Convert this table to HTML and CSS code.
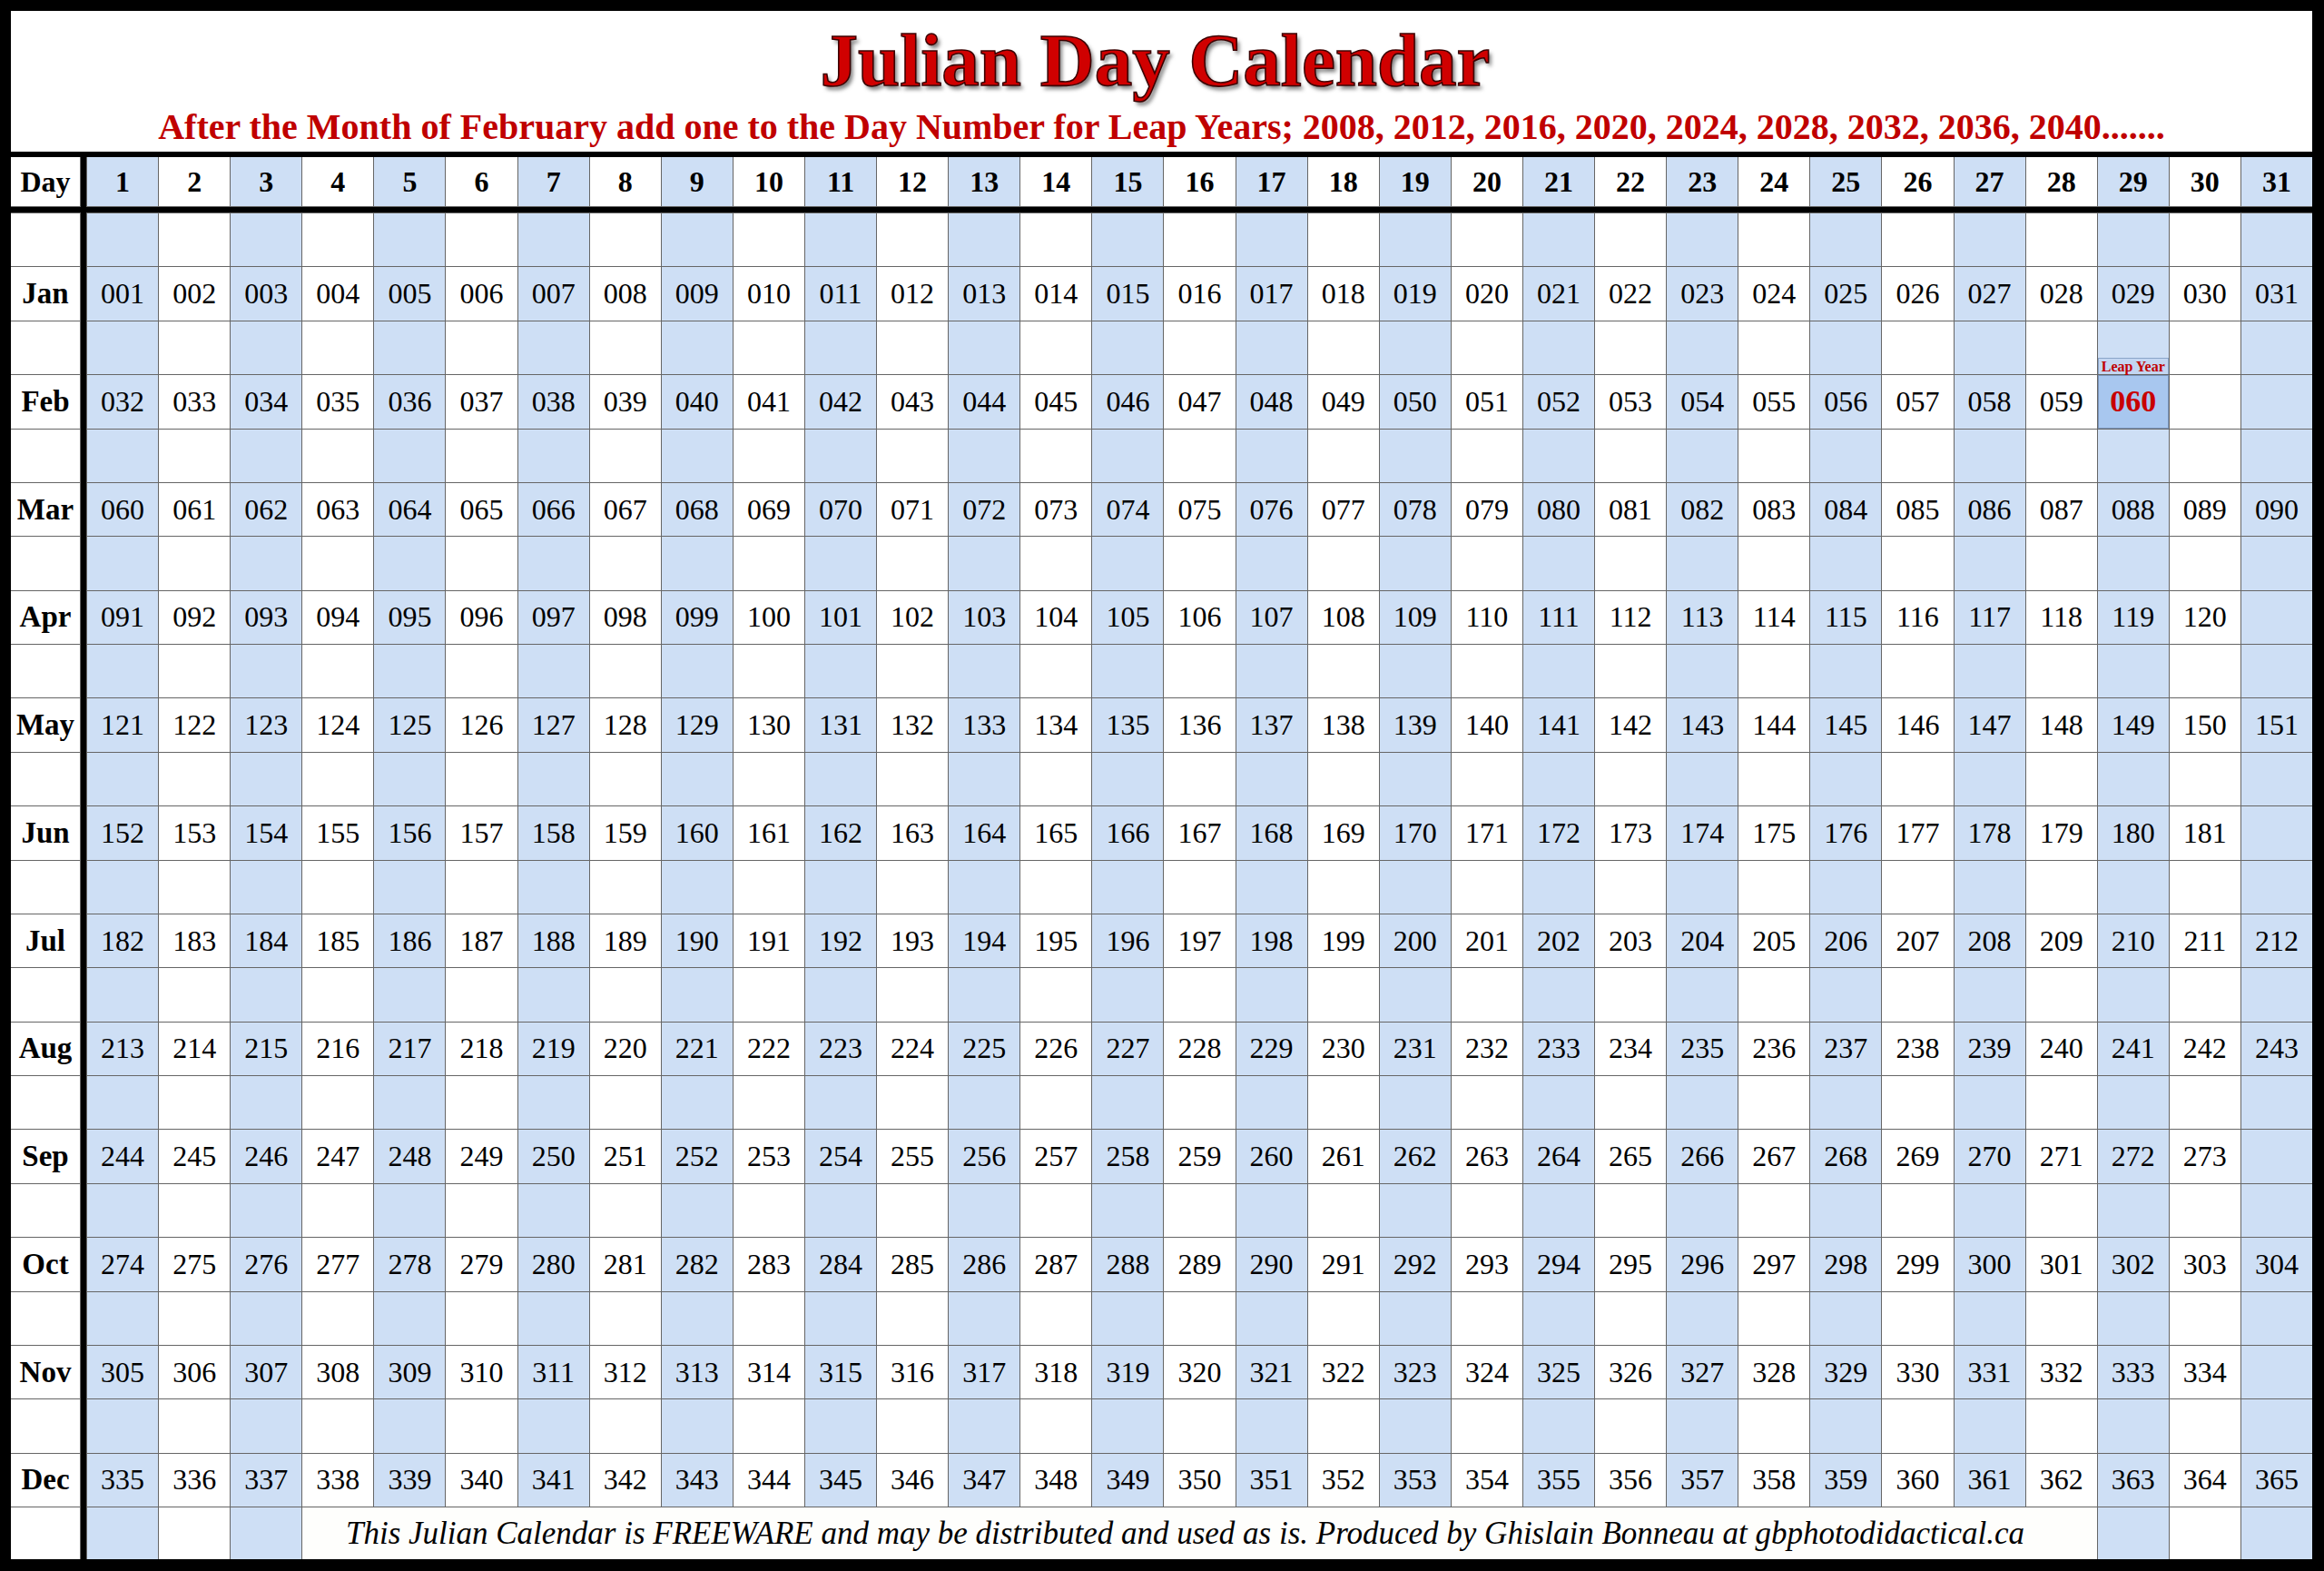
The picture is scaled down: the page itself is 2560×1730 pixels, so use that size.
FILE: index.html
```html
<!DOCTYPE html>
<html lang="en">
<head>
<meta charset="utf-8">
<title>Julian Day Calendar</title>
<link rel="stylesheet" href="styles.css">
</head>
<body>
<main class="sheet">
  <header class="title-box">
    <h1 class="title">Julian Day Calendar</h1>
    <p class="subtitle">After the Month of February add one to the Day Number for Leap Years; 2008, 2012, 2016, 2020, 2024, 2028, 2032, 2036, 2040.......</p>
  </header>
  <div class="grid" id="grid"></div>
</main>
<script src="script.js"></script>
</body>
</html>
```

FILE: styles.css
```css
html, body {
  margin: 0;
  padding: 0;
  background: #000;
}
body {
  width: 2560px;
  height: 1730px;
  overflow: hidden;
  font-family: "Liberation Serif", "Times New Roman", serif;
}
.sheet {
  box-sizing: border-box;
  width: 2560px;
  height: 1730px;
  padding: 12px 13px 13px 12px;
  display: flex;
  flex-direction: column;
  gap: 6px;
  background: #000;
}
.title-box {
  flex: none;
  height: 155px;
  box-sizing: border-box;
  padding-top: 13px;
  padding-right: 14px;
  background: #fff;
  text-align: center;
}
.title {
  margin: 0;
  font-size: 83px;
  line-height: 83px;
  font-weight: 700;
  color: #d00000;
  -webkit-text-stroke: 1.6px #3a0000;
  text-shadow: 3px 4px 4px rgba(0, 0, 0, 0.5);
}
.subtitle {
  margin: 12px 0 0;
  padding-left: 14px;
  font-size: 40px;
  line-height: 40px;
  font-weight: 700;
  color: #c00000;
  white-space: nowrap;
}
.grid {
  flex: 1;
  display: grid;
  grid-template-columns: 76px 6px repeat(31, 1fr);
  grid-template-rows: 54px 6px repeat(24, 1fr) 57px;
  gap: 1px;
  background: #666;
}
.sep-v {
  grid-column: 2;
  grid-row: 1 / -1;
  background: #000;
}
.sep-h {
  grid-column: 1 / -1;
  grid-row: 2;
  background: #000;
}
.cell {
  display: flex;
  align-items: center;
  justify-content: center;
  background: #fff;
  color: #000;
  font-size: 32px;
  white-space: nowrap;
}
.cell.blue {
  background: #cedff5;
}
.cell.head {
  font-size: 32px;
  font-weight: 700;
}
.cell.month {
  font-size: 33px;
  font-weight: 700;
}
.cell.note {
  grid-column: span 25;
  padding-right: 32px;
  font-size: 35px;
  font-style: italic;
  background: #fefefc;
}
.cell.leap-slot {
  align-items: flex-end;
}
.leap-label {
  display: block;
  width: 100%;
  height: 18px;
  box-sizing: border-box;
  background: #c3d6f1;
  border: 1px solid #8aa4c8;
  border-bottom: none;
  color: #c00000;
  font-size: 16px;
  line-height: 18px;
  font-weight: 700;
  text-align: center;
}
.cell.leap-day {
  background: #a8c7ef;
  color: #c80000;
  font-size: 34px;
  font-weight: 700;
  box-shadow: inset 0 0 0 1px #7a95bb;
}
```

FILE: script.js
```js
(function () {
  var grid = document.getElementById('grid');

  function cell(text, cls) {
    var d = document.createElement('div');
    d.className = 'cell' + (cls ? ' ' + cls : '');
    if (text) d.textContent = text;
    grid.appendChild(d);
    return d;
  }

  var v = document.createElement('div');
  v.className = 'sep-v';
  grid.appendChild(v);
  var h = document.createElement('div');
  h.className = 'sep-h';
  grid.appendChild(h);

  cell('Day', 'head');
  for (var d = 1; d <= 31; d++) {
    cell(String(d), 'head' + (d % 2 ? ' blue' : ''));
  }

  var months = [['Jan', 31], ['Feb', 28], ['Mar', 31], ['Apr', 30], ['May', 31], ['Jun', 30],
                ['Jul', 31], ['Aug', 31], ['Sep', 30], ['Oct', 31], ['Nov', 30], ['Dec', 31]];
  var n = 1;
  for (var m = 0; m < months.length; m++) {
    var name = months[m][0];
    var len = months[m][1];
    cell('', '');
    for (var a = 1; a <= 31; a++) {
      var c = cell('', a % 2 ? 'blue' : '');
      if (name === 'Feb' && a === 29) {
        c.className = 'cell blue leap-slot';
        var lab = document.createElement('span');
        lab.className = 'leap-label';
        lab.textContent = 'Leap Year';
        c.appendChild(lab);
      }
    }
    cell(name, 'month');
    for (var b = 1; b <= 31; b++) {
      if (b <= len) {
        var s = String(n++);
        while (s.length < 3) s = '0' + s;
        cell(s, b % 2 ? 'blue' : '');
      } else if (name === 'Feb' && b === 29) {
        cell('060', 'leap-day');
      } else {
        cell('', b % 2 ? 'blue' : '');
      }
    }
  }

  cell('', '');
  cell('', 'blue');
  cell('', '');
  cell('', 'blue');
  cell('This Julian Calendar is FREEWARE and may be distributed and used as is. Produced by Ghislain Bonneau at gbphotodidactical.ca', 'note');
  cell('', 'blue');
  cell('', '');
  cell('', 'blue');
})();
```
